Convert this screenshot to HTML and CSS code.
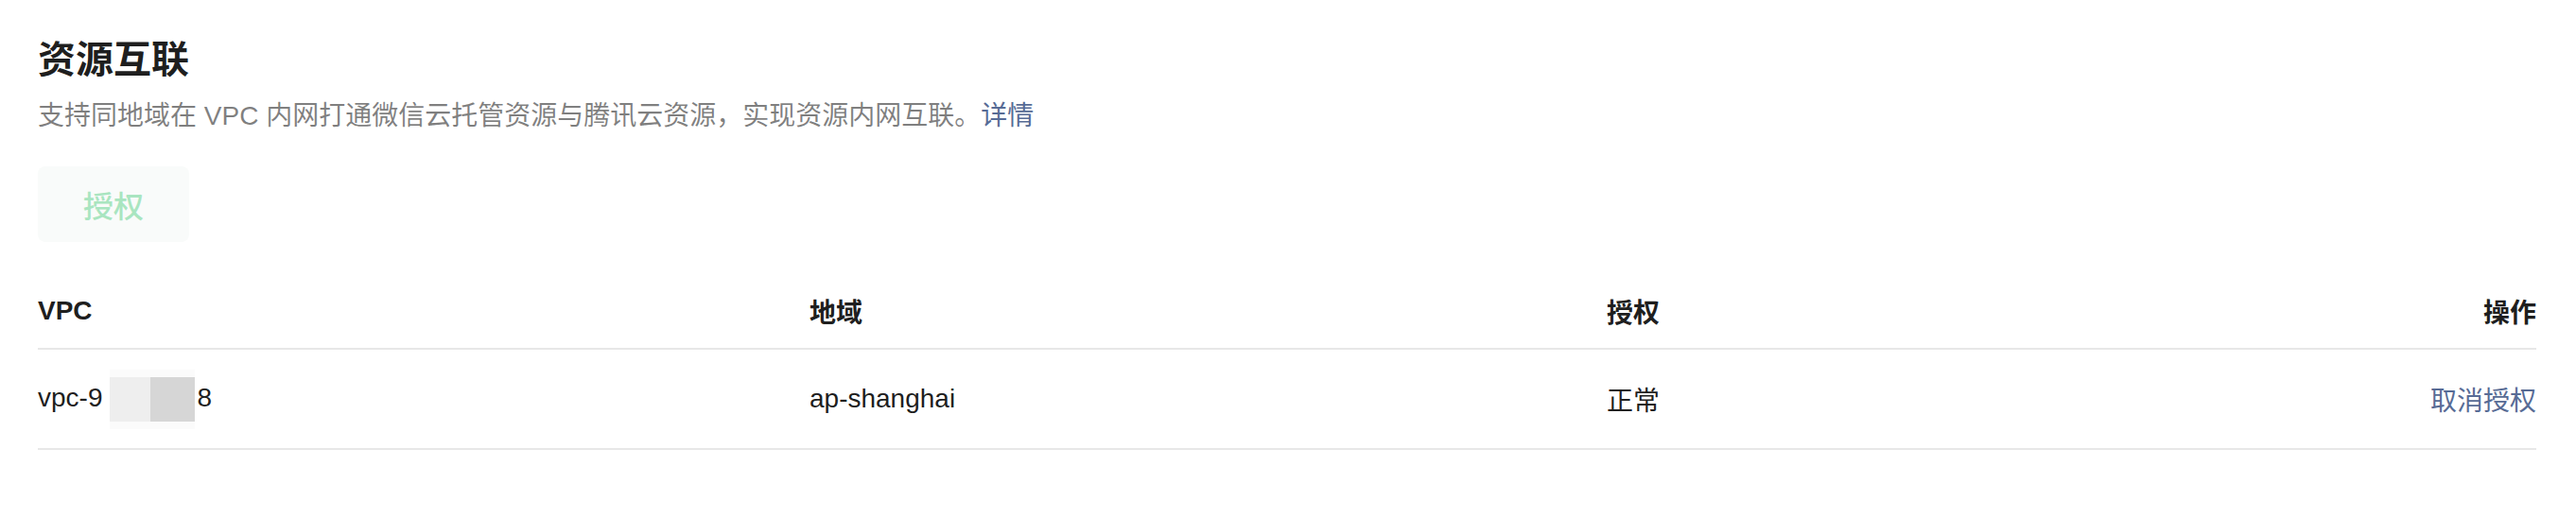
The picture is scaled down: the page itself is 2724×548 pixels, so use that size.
FILE: index.html
```html
<!DOCTYPE html>
<html lang="zh-CN">
<head>
  <meta charset="UTF-8">
  <title>资源互联</title>
  <link rel="stylesheet" href="styles.css">
</head>
<body>
  <div class="page">
    <h1 class="title">资源互联</h1>
    <p class="desc">支持同地域在 VPC 内网打通微信云托管资源与腾讯云资源，实现资源内网互联。<a class="link" href="#">详情</a></p>
    <button class="btn" disabled>授权</button>

    <div class="table">
      <div class="row head">
        <div class="cell">VPC</div>
        <div class="cell">地域</div>
        <div class="cell">授权</div>
        <div class="cell right">操作</div>
      </div>
      <div class="row">
        <div class="cell">vpc-9<span class="mask"><span class="mask-a"></span><span class="mask-b"></span></span>8</div>
        <div class="cell">ap-shanghai</div>
        <div class="cell">正常</div>
        <div class="cell right"><a class="link" href="#">取消授权</a></div>
      </div>
    </div>
  </div>
</body>
</html>
```

FILE: styles.css
```css
body { margin: 0; background: #fff; }
.page { padding: 35px 42px 0 40px; font-family: "Liberation Sans", "Noto Sans CJK SC", sans-serif; color: rgba(0,0,0,0.9); }
.title { margin: 0; font-size: 40px; line-height: 56px; font-weight: 600; }
.desc { margin: 12px 0 0; font-size: 28px; line-height: 40px; color: rgba(0,0,0,0.5); }
.link { color: #576b95; text-decoration: none; }
.btn { display: block; margin-top: 33px; width: 160px; height: 80px; border: none; border-radius: 8px; background: #f9fbfa; color: #a9e5c0; font-family: inherit; font-size: 32px; font-weight: 500; }

.table { margin-top: 34px; font-size: 28px; }
.row { display: grid; grid-template-columns: 816px 843px 1fr auto; align-items: center; height: 104px; border-bottom: 2px solid #e7e7e7; }
.row.head { height: 78px; font-weight: 700; }
.right { text-align: right; }
.mask { display: inline-flex; vertical-align: middle; padding: 8px 0; background: #fbfbfb; margin: 0 2px 0 8px; }
.mask-a { width: 43px; height: 47px; background: #eeeeee; }
.mask-b { width: 47px; height: 47px; background: #d6d6d6; }
```
